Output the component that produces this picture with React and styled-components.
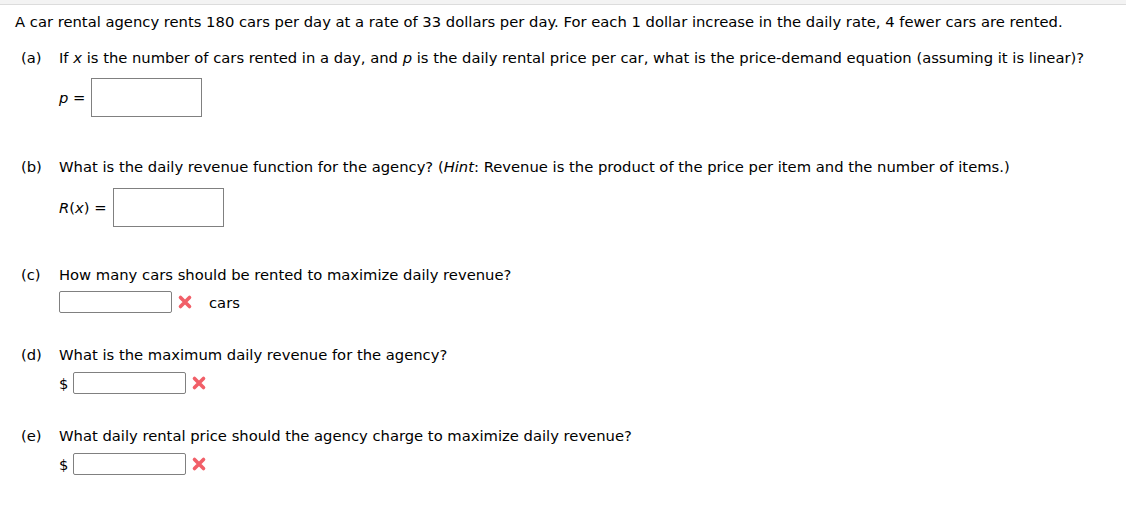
import styled, { createGlobalStyle } from 'styled-components';

const GlobalStyle = createGlobalStyle`
  body {
    margin: 0;
    background: #ffffff;
    font-family: 'DejaVu Sans', Verdana, sans-serif;
    font-size: 14.75px;
    color: #000000;
  }
`;

const Page = styled.div`
  width: 1126px;
  height: 517px;
  overflow: hidden;
`;

const TopBar = styled.div`
  height: 4px;
  background-color: #f3f3f3;
  border-bottom: 1px solid #dcdcdc;
`;

const Content = styled.div`
  padding: 9px 0 0 15px;
`;

const Intro = styled.p`
  margin: 0 0 20px 0;
  line-height: 16px;
`;

const Part = styled.div`
  margin-left: 6px;
  margin-bottom: ${({ gap }) => gap}px;
`;

const QuestionRow = styled.div`
  display: flex;
  line-height: 16px;
`;

const PartLabel = styled.span`
  width: 38px;
  flex-shrink: 0;
`;

const AnswerRow = styled.div`
  display: flex;
  align-items: center;
  margin-top: ${({ top }) => top}px;
  margin-left: 38px;
`;

const MathLabel = styled.span`
  margin-right: 6px;
  & i {
    font-style: italic;
  }
`;

const BigBox = styled.div`
  width: 109px;
  height: 37px;
  border: 1px solid #808080;
  background: #fff;
`;

const SmallBox = styled.div`
  width: 111px;
  height: 20px;
  border: 1px solid #808080;
  border-radius: 2px;
  background: #fff;
`;

const Dollar = styled.span`
  margin-right: 5px;
`;

const Unit = styled.span`
  margin-left: 16px;
`;

const WrongMark = styled.svg`
  margin-left: 5px;
  width: 16px;
  height: 16px;
  flex-shrink: 0;
`;

function Cross() {
  return (
    <WrongMark viewBox="0 0 16 16">
      <path
        d="M3.5 3.5 L12.5 12.5 M12.5 3.5 L3.5 12.5"
        stroke="#f0525c"
        strokeWidth="3.6"
        strokeLinecap="round"
        opacity="0.92"
      />
    </WrongMark>
  );
}

export default function App() {
  return (
    <Page>
      <GlobalStyle />
      <TopBar />
      <Content>
        <Intro>
          A car rental agency rents 180 cars per day at a rate of 33 dollars per
          day. For each 1 dollar increase in the daily rate, 4 fewer cars are
          rented.
        </Intro>

        <Part gap={42}>
          <QuestionRow>
            <PartLabel>(a)</PartLabel>
            <span>
              If <i>x</i> is the number of cars rented in a day, and <i>p</i> is
              the daily rental price per car, what is the price-demand equation
              (assuming it is linear)?
            </span>
          </QuestionRow>
          <AnswerRow top={12}>
            <MathLabel>
              <i>p</i> =
            </MathLabel>
            <BigBox />
          </AnswerRow>
        </Part>

        <Part gap={40}>
          <QuestionRow>
            <PartLabel>(b)</PartLabel>
            <span>
              What is the daily revenue function for the agency? (<i>Hint</i>:
              Revenue is the product of the price per item and the number of
              items.)
            </span>
          </QuestionRow>
          <AnswerRow top={13}>
            <MathLabel>
              <i>R</i>(<i>x</i>) =
            </MathLabel>
            <BigBox />
          </AnswerRow>
        </Part>

        <Part gap={34}>
          <QuestionRow>
            <PartLabel>(c)</PartLabel>
            <span>How many cars should be rented to maximize daily revenue?</span>
          </QuestionRow>
          <AnswerRow top={8}>
            <SmallBox />
            <Cross />
            <Unit>cars</Unit>
          </AnswerRow>
        </Part>

        <Part gap={34}>
          <QuestionRow>
            <PartLabel>(d)</PartLabel>
            <span>What is the maximum daily revenue for the agency?</span>
          </QuestionRow>
          <AnswerRow top={9}>
            <Dollar>$</Dollar>
            <SmallBox />
            <Cross />
          </AnswerRow>
        </Part>

        <Part gap={0}>
          <QuestionRow>
            <PartLabel>(e)</PartLabel>
            <span>
              What daily rental price should the agency charge to maximize daily
              revenue?
            </span>
          </QuestionRow>
          <AnswerRow top={9}>
            <Dollar>$</Dollar>
            <SmallBox />
            <Cross />
          </AnswerRow>
        </Part>
      </Content>
    </Page>
  );
}
